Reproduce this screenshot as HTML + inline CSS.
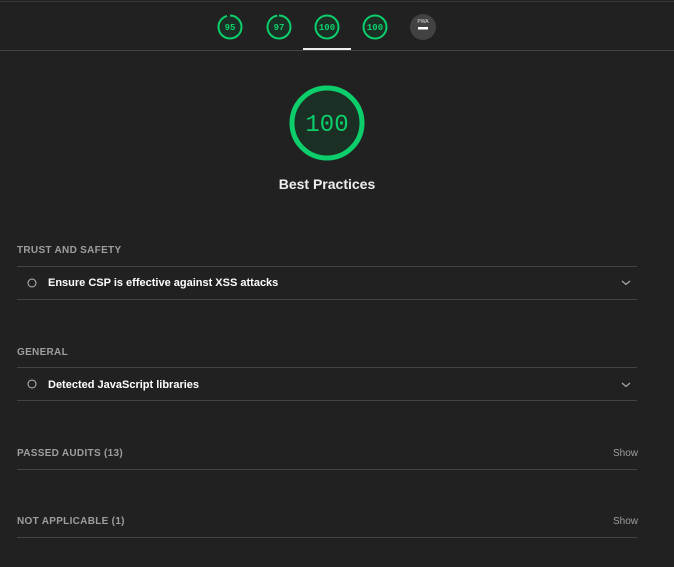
<!DOCTYPE html>
<html><head><meta charset="utf-8"><style>
html,body{margin:0;padding:0;background:#212121;width:674px;height:567px;overflow:hidden;font-family:"Liberation Sans",Arial,sans-serif;}
.a{position:absolute;}
.line{position:absolute;left:17px;width:620px;height:1px;background:#444;}
.hdr{position:absolute;left:17px;font-size:10px;color:#9e9e9e;letter-spacing:0.3px;font-weight:bold;}
.item{position:absolute;left:48px;font-size:11px;color:#fff;font-weight:bold;}
.show{position:absolute;right:36px;font-size:10px;color:#9e9e9e;}
</style></head><body>
<div class="a" style="left:0;top:1px;width:674px;height:1px;background:#3a3a3a"></div>
<div class="a" style="left:0;top:50px;width:674px;height:1px;background:#444"></div>
<div class="a" style="left:303px;top:48px;width:48px;height:2px;background:#eee"></div>
<svg class="a" style="left:0;top:0" width="674" height="60">
<g font-family="Liberation Mono,monospace" font-size="9" font-weight="bold" fill="#0cce6b" text-anchor="middle">
<circle cx="230" cy="27" r="11.5" fill="#1c2f24" stroke="#0cce6b" stroke-width="2" stroke-dasharray="68.7 72.3" transform="rotate(-90 230 27)"/>
<text x="230" y="30">95</text>
<circle cx="279" cy="27" r="11.5" fill="#1c2f24" stroke="#0cce6b" stroke-width="2" stroke-dasharray="70 72.3" transform="rotate(-90 279 27)"/>
<text x="279" y="30">97</text>
<circle cx="327" cy="27" r="11.5" fill="#1c2f24" stroke="#0cce6b" stroke-width="2"/>
<text x="327" y="30">100</text>
<circle cx="375" cy="27" r="11.5" fill="#1c2f24" stroke="#0cce6b" stroke-width="2"/>
<text x="375" y="30">100</text>
</g>
<circle cx="423" cy="27" r="13" fill="#424242"/>
<text x="423" y="23" font-size="5" fill="#ddd" text-anchor="middle" font-family="Liberation Sans">PWA</text>
<rect x="418" y="27" width="10" height="2.5" fill="#fff"/>
</svg>
<svg class="a" style="left:285px;top:81px" width="84" height="84">
<circle cx="42" cy="42" r="35" fill="#1c2f24" stroke="#0cce6b" stroke-width="5"/>
<text x="42" y="50" font-family="Liberation Mono,monospace" font-size="24" fill="#0cce6b" text-anchor="middle">100</text>
</svg>
<div class="a" style="left:0;width:654px;top:176px;text-align:center;font-size:14px;font-weight:bold;color:#eee">Best Practices</div>

<div class="hdr" style="top:245px">TRUST AND SAFETY</div>
<div class="line" style="top:266px"></div>
<svg class="a" style="left:27px;top:278px" width="10" height="10"><circle cx="5" cy="5" r="4" fill="none" stroke="#bbb" stroke-width="1"/></svg>
<div class="item" style="top:277px">Ensure CSP is effective against XSS attacks</div>
<svg class="a" style="left:621px;top:280px" width="10" height="6"><path d="M1 1 L5 4.5 L9 1" fill="none" stroke="#aaa" stroke-width="1.2"/></svg>
<div class="line" style="top:299px"></div>

<div class="hdr" style="top:347px">GENERAL</div>
<div class="line" style="top:367px"></div>
<svg class="a" style="left:27px;top:379px" width="10" height="10"><circle cx="5" cy="5" r="4" fill="none" stroke="#bbb" stroke-width="1"/></svg>
<div class="item" style="top:379px">Detected JavaScript libraries</div>
<svg class="a" style="left:621px;top:382px" width="10" height="6"><path d="M1 1 L5 4.5 L9 1" fill="none" stroke="#aaa" stroke-width="1.2"/></svg>
<div class="line" style="top:400px"></div>

<div class="hdr" style="top:448px">PASSED AUDITS (13)</div>
<div class="show" style="top:448px">Show</div>
<div class="line" style="top:469px"></div>

<div class="hdr" style="top:516px">NOT APPLICABLE (1)</div>
<div class="show" style="top:516px">Show</div>
<div class="line" style="top:537px"></div>
</body></html>
